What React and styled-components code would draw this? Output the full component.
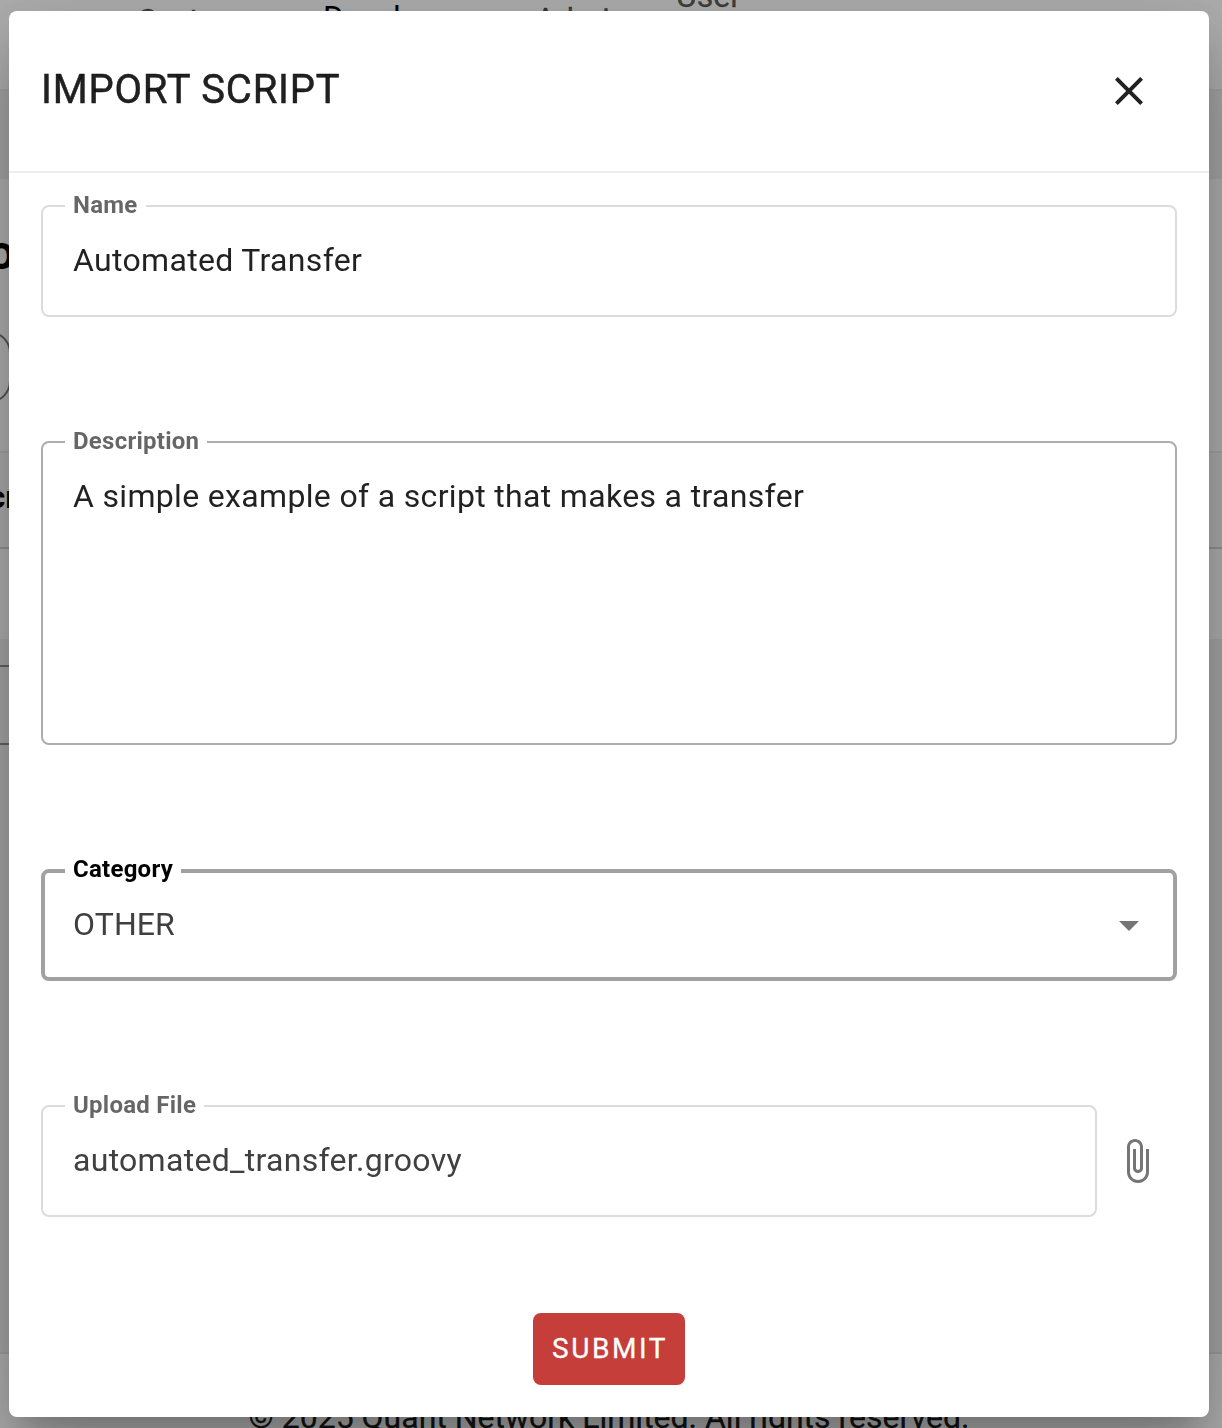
import React from 'react';
import styled, { createGlobalStyle } from 'styled-components';

const GlobalStyle = createGlobalStyle`
  *, *::before, *::after { box-sizing: border-box; }
  body {
    margin: 0;
    overflow: hidden;
    font-family: Roboto, sans-serif;
    color: rgba(0, 0, 0, 0.87);
    -webkit-font-smoothing: antialiased;
  }
`;

const Page = styled.div`
  height: 1428px;
  display: flex;
  flex-direction: column;
  overflow: hidden;
  background: #f2f2f2;
`;

const TopBar = styled.header`
  height: 91px;
  flex: none;
  display: flex;
  align-items: flex-start;
  background: #fff;
  border-bottom: 2px solid #ececec;
`;

const NavItem = styled.span`
  flex: none;
  width: ${(p) => p.$width}px;
  margin-top: ${(p) => p.$shift}px;
  font-size: 32px;
  line-height: 38px;
  font-weight: 400;
  color: ${(p) => (p.$active ? '#000' : 'rgba(0, 0, 0, 0.65)')};
  -webkit-text-stroke: ${(p) => (p.$active ? 0 : 0.3)}px currentColor;
`;

const NavSpacer = styled.span`
  flex: none;
  width: 138px;
`;

const Band = styled.div`
  height: 88px;
  flex: none;
`;

const Content = styled.main`
  height: 460px;
  flex: none;
  display: flex;
  flex-direction: column;
  align-items: flex-start;
  background: #fff;
`;

const PageTitle = styled.h1`
  margin: 44px 0 0 -12px;
  height: 62px;
  font-size: 48px;
  line-height: 60px;
  font-weight: 700;
  color: #000;
`;

const RoundButton = styled.span`
  width: 72px;
  height: 72px;
  margin: 46px 0 0 -61px;
  flex: none;
  border: 2px solid #7a7a7a;
  border-radius: 22px;
`;

const TableHead = styled.div`
  align-self: stretch;
  height: 98px;
  margin-top: 48px;
  flex: none;
  border-top: 2px solid #ececec;
  border-bottom: 2px solid #d4d4d4;
  background: #fafafa;
`;

const HeadCell = styled.span`
  display: block;
  width: 200px;
  margin-left: -66px;
  font-size: 32px;
  line-height: 88px;
  font-weight: 700;
  color: #000;
`;

const Lower = styled.div`
  flex: 1;
  display: flex;
  align-items: flex-start;
`;

const PageSelect = styled.span`
  width: 120px;
  height: 80px;
  margin: 26px 0 0 -60px;
  border: 2px solid #909090;
`;

const Footer = styled.footer`
  height: 76px;
  flex: none;
  padding: 41px 4px 0 0;
  border-top: 2px solid #e6e6e6;
  background: #fff;
  color: rgba(0, 0, 0, 0.9);
  font-size: 32px;
  line-height: 44px;
  text-align: center;
  white-space: nowrap;
  -webkit-text-stroke: 0.3px currentColor;
`;

const Backdrop = styled.div`
  position: fixed;
  inset: 0;
  padding: 11px 13px 11px 9px;
  background: rgba(0, 0, 0, 0.32);
`;

const Dialog = styled.section`
  height: 1406px;
  display: flex;
  flex-direction: column;
  border-radius: 8px;
  background: #fff;
  box-shadow: 0 22px 30px -14px rgba(0, 0, 0, 0.2), 0 48px 76px 6px rgba(0, 0, 0, 0.14),
    0 18px 92px 16px rgba(0, 0, 0, 0.12);
`;

const DialogHeader = styled.header`
  height: 162px;
  flex: none;
  display: flex;
  justify-content: space-between;
  align-items: center;
  padding: 0 56px 0 32px;
  border-bottom: 2px solid #eee;
`;

const DialogTitle = styled.h2`
  margin: 0;
  padding-bottom: 2px;
  font-size: 40px;
  line-height: 64px;
  font-weight: 400;
  letter-spacing: 0.8px;
  -webkit-text-stroke: 0.5px currentColor;
`;

const IconButton = styled.button`
  width: 48px;
  height: 48px;
  padding: 0;
  flex: none;
  border: 0;
  background: none;
  color: ${(p) => p.$color};

  svg { display: block; }
`;

const Form = styled.form`
  flex: 1;
  display: flex;
  flex-direction: column;
  gap: 112px;
  padding: 20px 32px 0;
`;

const Outline = styled.fieldset`
  height: ${(p) => p.$height + 12}px;
  width: ${(p) => (p.$width ? p.$width + 'px' : '100%')};
  min-width: 0;
  margin: 0;
  flex: none;
  padding: 0 ${(p) => 24 - p.$line}px;
  border: ${(p) => p.$line}px solid ${(p) => p.$border};
  border-radius: 8px;
`;

const Label = styled.legend`
  padding: 0 8px ${(p) => (p.$focused ? 4 : 2)}px;
  font-size: 24px;
  line-height: 24px;
  font-weight: 700;
  letter-spacing: 0.25px;
  color: ${(p) => (p.$focused ? '#000' : 'rgba(0, 0, 0, 0.6)')};
`;

const Value = styled.div`
  display: flex;
  justify-content: space-between;
  align-items: center;
  height: 48px;
  margin-top: ${(p) => p.$top}px;
  padding: 0 0 0 8px;
  font-size: 32px;
  line-height: 48px;
  letter-spacing: ${(p) => p.$spacing ?? 0.33}px;
  color: ${(p) => (p.$muted ? '#404040' : 'rgba(0, 0, 0, 0.87)')};

  ${IconButton} { margin-top: 2px; }
`;

const UploadRow = styled.div`
  display: flex;
  gap: 16px;
  align-items: flex-start;

  > ${IconButton} { margin-top: 44px; }
`;

const Submit = styled.button`
  align-self: center;
  width: 152px;
  height: 72px;
  margin-top: -16px;
  padding: 0 0 2px 2px;
  border: 0;
  border-radius: 8px;
  background: #c53e39;
  color: #fff;
  font-family: inherit;
  font-size: 28px;
  font-weight: 400;
  letter-spacing: 2.55px;
  -webkit-text-stroke: 0.3px currentColor;
`;

const Icon = ({ path }) => (
  <svg width="48" height="48" viewBox="0 0 24 24" fill="currentColor" aria-hidden="true">
    <path d={path} />
  </svg>
);

const CLOSE = 'M19 6.41L17.59 5 12 10.59 6.41 5 5 6.41 10.59 12 5 17.59 6.41 19 12 13.41 17.59 19 19 17.59 13.41 12z';
const CARET = 'M7 10l5 5 5-5z';
const CLIP =
  'M16.5 6v11.5c0 2.21-1.79 4-4 4s-4-1.79-4-4V5c0-1.38 1.12-2.5 2.5-2.5s2.5 1.12 2.5 2.5v10.5c0 .55-.45 1-1 1s-1-.45-1-1V6H10v9.5c0 1.38 1.12 2.5 2.5 2.5s2.5-1.12 2.5-2.5V5c0-2.21-1.79-4-4-4S7 2.79 7 5v12.5c0 3.04 2.46 5.5 5.5 5.5s5.5-2.46 5.5-5.5V6h-1.5z';

function Background() {
  return (
    <Page>
      <TopBar>
        <NavSpacer />
        <NavItem $width={185} $shift={1}>System</NavItem>
        <NavItem $width={212} $shift={-2} $active>Developer</NavItem>
        <NavItem $width={141} $shift={0}>Admin</NavItem>
        <NavItem $width={120} $shift={-23}>User</NavItem>
      </TopBar>
      <Band />
      <Content>
        <PageTitle>o</PageTitle>
        <RoundButton />
        <TableHead>
          <HeadCell>Description</HeadCell>
        </TableHead>
      </Content>
      <Lower>
        <PageSelect />
      </Lower>
      <Footer>© 2025 Quant Network Limited. All rights reserved.</Footer>
    </Page>
  );
}

export default function App() {
  return (
    <>
      <GlobalStyle />
      <Background />
      <Backdrop>
        <Dialog role="dialog" aria-label="Import script">
          <DialogHeader>
            <DialogTitle>IMPORT SCRIPT</DialogTitle>
            <IconButton $color="#212121" aria-label="Close">
              <Icon path={CLOSE} />
            </IconButton>
          </DialogHeader>
          <Form>
            <Outline $height={112} $line={2} $border="#dcdcdc">
              <Label>Name</Label>
              <Value $top={17}>Automated Transfer</Value>
            </Outline>
            <Outline $height={304} $line={2} $border="#adadad">
              <Label>Description</Label>
              <Value $top={17}>A simple example of a script that makes a transfer</Value>
            </Outline>
            <Outline $height={112} $line={4} $border="#a1a1a1">
              <Label $focused>Category</Label>
              <Value $top={15} $muted $spacing={0.1}>
                OTHER
                <IconButton as="span" $color="#757575">
                  <Icon path={CARET} />
                </IconButton>
              </Value>
            </Outline>
            <UploadRow>
              <Outline $height={112} $width={1056} $line={2} $border="#dcdcdc">
                <Label>Upload File</Label>
                <Value $top={17} $muted $spacing={0.29}>automated_transfer.groovy</Value>
              </Outline>
              <IconButton type="button" $color="#757575" aria-label="Attach file">
                <Icon path={CLIP} />
              </IconButton>
            </UploadRow>
            <Submit type="button">SUBMIT</Submit>
          </Form>
        </Dialog>
      </Backdrop>
    </>
  );
}
